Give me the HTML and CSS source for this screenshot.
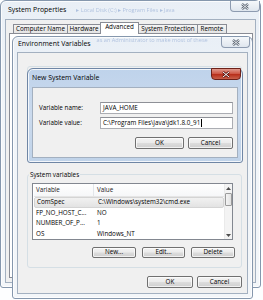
FILE: index.html
```html
<!DOCTYPE html>
<html lang="en">
<head>
<meta charset="UTF-8" />
<meta name="viewport" content="width=device-width, initial-scale=1.0" />
<title>Environment Variables</title>
<link rel="stylesheet" href="styles.css">
</head>
<body>

<div class="window sysprop">
  <div class="titlebar">
    <span class="title">System Properties</span>
    <span class="glass-text">&#9656; Local Disk (C:) &#9656; Program Files &#9656; Java</span>
    <div class="close-btn">
      <svg width="8" height="7" viewBox="0 0 8 7"><path d="M1 1L7 6M7 1L1 6" stroke="#5c6673" stroke-width="2.3" fill="none"/><path d="M1 1L7 6M7 1L1 6" stroke="#f5f7f9" stroke-width="0.9" fill="none"/></svg>
    </div>
  </div>
  <div class="client">
    <div class="tabs">
      <div class="tab">Computer Name</div>
      <div class="tab">Hardware</div>
      <div class="tab selected">Advanced</div>
      <div class="tab">System Protection</div>
      <div class="tab">Remote</div>
    </div>
    <div class="tab-panel"></div>
  </div>
</div>

<div class="window envvars">
  <div class="titlebar">
    <span class="title">Environment Variables</span>
    <span class="glass-text">as an Administrator to make most of these</span>
    <div class="close-btn">
      <svg width="8" height="7" viewBox="0 0 8 7"><path d="M1 1L7 6M7 1L1 6" stroke="#5c6673" stroke-width="2.3" fill="none"/><path d="M1 1L7 6M7 1L1 6" stroke="#f5f7f9" stroke-width="0.9" fill="none"/></svg>
    </div>
  </div>
  <div class="client env-client">
    <fieldset class="group user-group"></fieldset>

    <fieldset class="group sys-group">
      <legend>System variables</legend>
      <div class="listview">
        <div class="list-body">
          <div class="list-row list-head">
            <span class="col-name">Variable</span>
            <span class="col-value">Value</span>
          </div>
          <div class="list-row selected">
            <span class="col-name">ComSpec</span>
            <span class="col-value">C:\Windows\system32\cmd.exe</span>
          </div>
          <div class="list-row">
            <span class="col-name">FP_NO_HOST_C...</span>
            <span class="col-value">NO</span>
          </div>
          <div class="list-row">
            <span class="col-name">NUMBER_OF_P...</span>
            <span class="col-value">1</span>
          </div>
          <div class="list-row">
            <span class="col-name">OS</span>
            <span class="col-value">Windows_NT</span>
          </div>
        </div>
        <div class="scrollbar">
          <div class="arrow"><svg width="5" height="3" viewBox="0 0 5 3"><path d="M0 3L2.5 0L5 3Z" fill="#4d4d4d"/></svg></div>
          <div class="track"><div class="thumb"></div></div>
          <div class="arrow"><svg width="5" height="3" viewBox="0 0 5 3"><path d="M0 0L2.5 3L5 0Z" fill="#4d4d4d"/></svg></div>
        </div>
      </div>
      <div class="button-row">
        <div class="btn btn-new">New...</div>
        <div class="btn btn-edit">Edit...</div>
        <div class="btn btn-delete">Delete</div>
      </div>
    </fieldset>

    <div class="button-row dialog-buttons">
      <div class="btn btn-ok">OK</div>
      <div class="btn btn-cancel">Cancel</div>
    </div>
  </div>
</div>

<div class="window newvar">
  <div class="titlebar">
    <span class="title">New System Variable</span>
    <div class="close-btn active">
      <svg width="8" height="7" viewBox="0 0 8 7"><path d="M1 1L7 6M7 1L1 6" stroke="#5a1510" stroke-width="2.4" fill="none"/><path d="M1 1L7 6M7 1L1 6" stroke="#ffffff" stroke-width="1" fill="none"/></svg>
    </div>
  </div>
  <div class="client newvar-client">
    <div class="form">
      <label>Variable name:</label>
      <div class="textbox">JAVA_HOME</div>
      <label>Variable value:</label>
      <div class="textbox">C:\Program Files\Java\jdk1.8.0_91<span class="caret"></span></div>
    </div>
    <div class="button-row">
      <div class="btn btn-ok2">OK</div>
      <div class="btn btn-cancel2">Cancel</div>
    </div>
  </div>
</div>

</body>
</html>
```

FILE: styles.css
```css
* {
  box-sizing: border-box;
}
body {
  margin: 0;
  width: 263px;
  height: 300px;
  overflow: hidden;
  position: relative;
  background: #fdfeff;
  font-family: "Open Sans", "Segoe UI", sans-serif;
  font-size: 6.3px;
  line-height: 1;
  color: #000;
}

/* windows */
.window {
  position: absolute;
  display: flex;
  flex-direction: column;
  border: 1px solid #8597ad;
  border-radius: 6px 6px 3px 3px;
  background: linear-gradient(180deg, #e9eff6 0%, #f1f5f9 35%, #f3f6f9 100%);
  box-shadow: inset 0 0 0 1px rgba(255, 255, 255, 0.8);
}
.sysprop {
  left: 0;
  top: 0;
  width: 261px;
  height: 288px;
}
.envvars {
  left: 12px;
  top: 36px;
  width: 241px;
  height: 263px;
}
.newvar {
  left: 27px;
  top: 68px;
  width: 216px;
  height: 95px;
  border-color: #6f86a5;
  background: linear-gradient(180deg, #bfd3eb 0%, #cbdaed 50%, #c0d3e9 100%);
}

.titlebar {
  position: relative;
  flex: none;
  display: flex;
  align-items: center;
  height: 18px;
  padding-left: 7px;
  font-size: 6.9px;
  white-space: nowrap;
}
.envvars .titlebar {
  height: 15px;
  padding-left: 5px;
}
.newvar .titlebar {
  padding-left: 4px;
}
.glass-text {
  margin-left: 10px;
  font-size: 5.6px;
  color: rgba(70, 110, 180, 0.35);
  filter: blur(0.7px);
  position: relative;
  top: 1px;
}
.envvars .glass-text {
  margin-left: 6px;
  top: -4px;
}

.close-btn {
  position: absolute;
  top: 0;
  right: 0;
  width: 30px;
  height: 11px;
  display: flex;
  align-items: center;
  justify-content: center;
  border: 1px solid #8d9bb0;
  border-top: none;
  border-radius: 0 0 4px 4px;
  background: linear-gradient(180deg, #f5f8fb, #dfe6ee);
  z-index: 2;
}
.envvars .close-btn {
  right: 2px;
  width: 29px;
}
.close-btn.active {
  top: -1px;
  right: 1px;
  height: 12px;
  border: 1px solid #6d2119;
  background: linear-gradient(180deg, #e09a8e 0%, #cf5a48 45%, #b8301c 55%, #c9604a 100%);
}

.client {
  flex: 1;
  min-height: 0;
  margin: 0 4px 4px;
  display: flex;
  flex-direction: column;
  border: 1px solid #a3b0c0;
  background: #f0f0f0;
}

/* tabs */
.tabs {
  display: flex;
  align-items: flex-end;
  height: 13px;
  padding: 2px 0 0 7px;
  position: relative;
  z-index: 1;
}
.tab {
  height: 9px;
  display: flex;
  align-items: center;
  justify-content: center;
  border: 1px solid #898c95;
  border-bottom: none;
  background: linear-gradient(180deg, #f4f4f4, #e4e4e4);
  white-space: nowrap;
}
.tab + .tab {
  margin-left: -1px;
}
.tab:nth-child(1) { width: 55px; }
.tab:nth-child(2) { width: 34px; }
.tab:nth-child(3) { width: 39px; }
.tab:nth-child(4) { width: 60px; }
.tab:nth-child(5) { width: 30px; }
.tab.selected {
  height: 12px;
  margin-bottom: -1px;
  background: #fff;
  position: relative;
  z-index: 1;
  padding-bottom: 2px;
}
.tab-panel {
  flex: 1;
  margin: 0 2px 4px 3px;
  border: 1px solid #898c95;
  background: #fff;
}

/* environment variables */
.env-client {
  padding: 13px 5px 4px 9px;
}
.group {
  margin: 0;
  padding: 4px 6px 9px 4px;
  min-width: 0;
  border: 1px solid #d5dfe5;
  border-radius: 3px;
}
.group legend {
  height: 9px;
  line-height: 9px;
  padding: 0 1px;
  margin-left: -3px;
}
.user-group {
  height: 95px;
  margin-bottom: 9px;
}
.sys-group {
  height: 98px;
}

.listview {
  display: flex;
  width: 201px;
  height: 57px;
  border: 1px solid #828790;
  background: #fff;
}
.list-body {
  flex: 1;
  padding-left: 1px;
}
.list-row {
  display: flex;
  align-items: center;
  height: 10.5px;
  white-space: nowrap;
}
.list-head {
  height: 13px;
  border-bottom: 1px solid #e5e5e5;
  background: linear-gradient(180deg, #ffffff, #f6f7f9);
  color: #1b1b1b;
}
.list-head .col-name {
  border-right: 1px solid #e3e6ea;
  height: 100%;
  display: flex;
  align-items: center;
}
.list-row.selected {
  background: linear-gradient(180deg, #f1f1f1, #e3e3e3);
  border: 1px solid #d4d4d4;
  border-radius: 2px;
}
.col-name {
  width: 60px;
  padding-left: 2px;
}
.col-value {
  padding-left: 3px;
}
.scrollbar {
  width: 8px;
  display: flex;
  flex-direction: column;
  border-left: 1px solid #eaeaea;
  background: #f3f3f3;
}
.arrow {
  height: 8px;
  display: flex;
  align-items: center;
  justify-content: center;
}
.track {
  flex: 1;
  padding-top: 1px;
}
.thumb {
  height: 13px;
  border: 1px solid #9b9b9b;
  border-radius: 1px;
  background: linear-gradient(90deg, #f4f4f4, #e2e2e2);
}

.button-row {
  display: flex;
  justify-content: flex-end;
  gap: 6px;
  margin-top: 7px;
}
.btn {
  height: 11px;
  display: flex;
  align-items: center;
  justify-content: center;
  border: 1px solid #707070;
  border-radius: 2px;
  background: linear-gradient(180deg, #f3f3f3 0%, #ebebeb 48%, #dddddd 52%, #cfcfcf 100%);
  box-shadow: inset 0 0 0 1px rgba(255, 255, 255, 0.7);
}
.btn-new { width: 44px; }
.btn-edit { width: 43px; }
.btn-delete { width: 44px; }
.dialog-buttons {
  gap: 4px;
  margin-top: 8px;
}
.dialog-buttons .btn {
  height: 12px;
}
.btn-ok { width: 46px; }
.btn-cancel { width: 45px; }

/* new system variable */
.newvar-client {
  padding: 14px 4px 0 6px;
}
.form {
  display: grid;
  grid-template-columns: 61px 133px;
  grid-auto-rows: 12px;
  row-gap: 3px;
  align-items: center;
}
.textbox {
  height: 12px;
  display: flex;
  align-items: center;
  padding-left: 2px;
  border: 1px solid #abadb3;
  border-top-color: #8e9097;
  background: #fff;
  white-space: nowrap;
}
.caret {
  display: inline-block;
  width: 1px;
  height: 8px;
  background: #000;
  margin-left: 1px;
}
.newvar-client .button-row {
  gap: 4px;
  margin-top: 8px;
}
.btn-ok2 { width: 49px; height: 12px; }
.btn-cancel2 { width: 45px; height: 12px; }
```
